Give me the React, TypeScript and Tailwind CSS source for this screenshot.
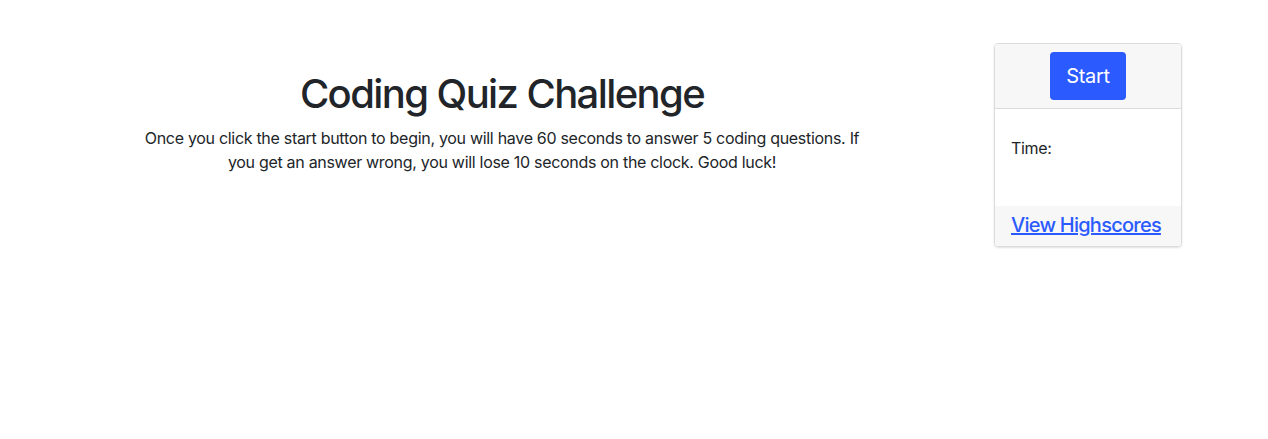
export default function App() {
  return (
    <div className="min-h-screen bg-white font-['Inter',sans-serif] text-[#212529]">
      <div className="flex items-start pl-[14px] pt-[43px]">
        {/* Intro */}
        <div className="flex w-[976px] flex-col items-center pt-[27px] text-center">
          <h1 className="text-[40px] font-medium leading-[48px] tracking-[-1.6px]">Coding Quiz Challenge</h1>
          <p className="mt-2 max-w-[730px] text-base leading-6 tracking-[-0.3px]">
            Once you click the start button to begin, you will have 60 seconds to answer 5 coding questions. If
            you get an answer wrong, you will lose 10 seconds on the clock. Good luck!
          </p>
        </div>

        {/* Side card */}
        <div className="ml-[4px] w-[188px] overflow-hidden rounded border border-[#dcdcdc] shadow-[0_1px_2px_rgba(0,0,0,0.12)]">
          <div className="flex justify-center border-b border-[#dcdcdc] bg-[#f7f7f7] py-2">
            <button className="h-12 w-[76px] rounded bg-[#2b5bff] text-xl tracking-[-0.3px] text-white">Start</button>
          </div>
          <div className="h-[97px] px-4 pt-[27px] text-base tracking-[-0.3px]">Time:</div>
          <div className="bg-[#f7f7f7] px-4 pb-[7px] pt-[5px]">
            <a href="#" className="whitespace-nowrap text-xl font-medium tracking-[-0.75px] text-[#2b5bff] underline">
              View Highscores
            </a>
          </div>
        </div>
      </div>
    </div>
  );
}
